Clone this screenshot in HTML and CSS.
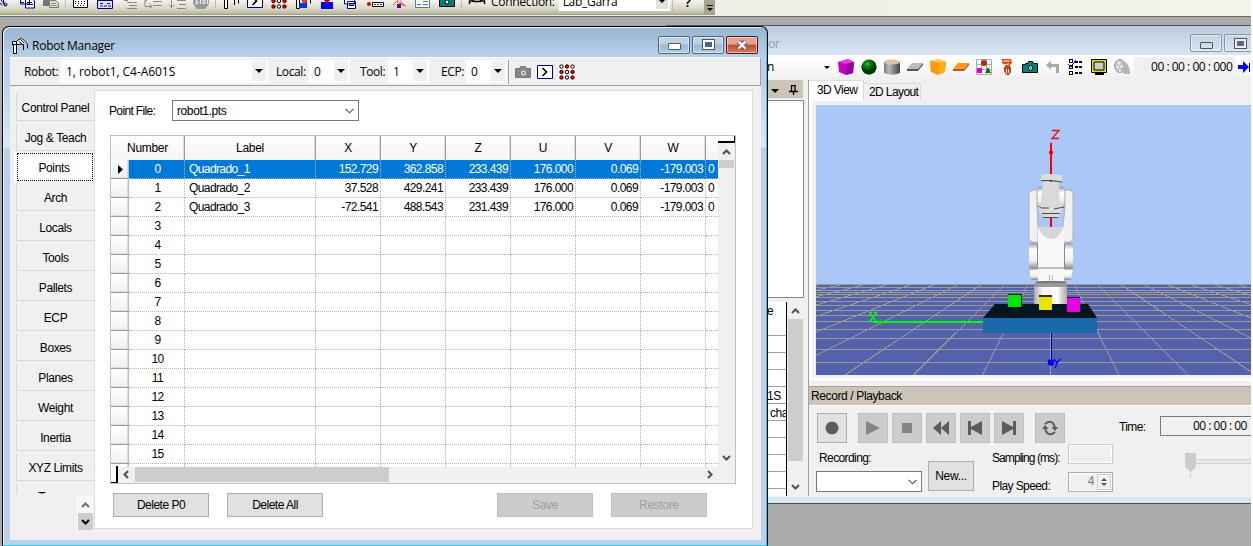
FILE: index.html
```
<!DOCTYPE html>
<html lang="en">
<head>
<meta charset="utf-8">
<title>Robot Manager</title>
<link rel="stylesheet" href="styles.css">
</head>
<body>
<svg class="defs" width="0" height="0">
  <defs>
    <g id="arm"><path d="M4 4l3-3 3-1 4 3 1 3-4 1-5-1z" fill="#fff"/><path d="M1.500 6.500v9h3v-9" fill="#fff" stroke="#000"/><path d="M.5 3.500h4v3h-4z" fill="#fff" stroke="#000"/><path d="M4.500 3.500l2-2 3-1 3 2 3 4M5 6.500l4-.5 3 1M8.500 1.500l4 4M6.500 3l4 3.500" fill="none" stroke="#000"/><path d="M11.500 6.500v5.500M15.500 6.500v4" stroke="#000" fill="none"/></g>
    <g id="dots">
      <g fill="#fff" stroke="#000"><circle cx="2.500" cy="2.500" r="1.700"/><circle cx="8" cy="8" r="1.700"/><circle cx="13.500" cy="2.500" r="1.700"/><circle cx="8" cy="13.500" r="1.700"/></g>
      <g fill="#f00" stroke="#300"><circle cx="8" cy="2.500" r="1.700"/><circle cx="2.500" cy="8" r="1.700"/><circle cx="13.500" cy="8" r="1.700"/><circle cx="2.500" cy="13.500" r="1.700"/><circle cx="13.500" cy="13.500" r="1.700"/></g>
    </g>
    <g id="console"><path d="M.5 1.500h15v13h-15z" fill="#fff" stroke="#000080"/><path d="M5.500 4l4 4-4 4" fill="none" stroke="#000" stroke-width="1.600"/></g>
    <g id="camera"><path d="M.5 5.500h3v-1h2l1-2h4l1 2h4v9h-15z" stroke="#000"/><circle cx="8.500" cy="9" r="2.300" fill="#fff" stroke="#000"/><circle cx="8.500" cy="9" r="1"/></g>
    <linearGradient id="cyl"><stop offset="0" stop-color="#777"/><stop offset=".3" stop-color="#bbb"/><stop offset="1" stop-color="#444"/></linearGradient>
    <linearGradient id="tube"><stop offset="0" stop-color="#aaa"/><stop offset=".25" stop-color="#f4f4f4"/><stop offset=".7" stop-color="#fff"/><stop offset="1" stop-color="#aaa"/></linearGradient>
    <linearGradient id="joint" x2="0" y2="1"><stop offset="0" stop-color="#999"/><stop offset=".25" stop-color="#fff"/><stop offset=".7" stop-color="#eee"/><stop offset="1" stop-color="#888"/></linearGradient>
    <radialGradient id="ball" cx=".4" cy=".3"><stop offset="0" stop-color="#9f9"/><stop offset=".4" stop-color="#0a0a14" stop-opacity="0"/><stop offset="1" stop-color="#003800"/></radialGradient>
  </defs>
</svg>
<div class="desktop">
  <header class="mainbar">
    <div class="strip">
      <svg class="strip-icons" width="490" height="14" viewBox="0 0 490 14">
        <path d="M0 2.500l2 3M3.500 0v4M1 0l5 6" fill="none" stroke="#000080"/><circle cx="5.500" cy="4.500" r="1.500" fill="none" stroke="#000080"/>
        <g fill="#fff" stroke="#000080"><path d="M20.500-2h9v6h-9zM25.500-1h7l2 2v7h-9z"/></g><path d="M27 2.500h5M27 4.500h6M21 2.500h3" stroke="#000080"/>
        <path d="M43-1h13v7h-13z" fill="#777"/><path d="M49.500.5h6l3 3v4h-9z" fill="#ddd" stroke="#777"/><path d="M51 3.500h5M51 5.500h6" stroke="#888"/>
        <path d="M65.500-1v10" stroke="#bbb"/>
        <path d="M73.500-1h14v8.500h-14z" fill="#fff" stroke="#000"/><path d="M75 1.500h11M75 3.500h11M77 5.500h8" stroke="#000" stroke-dasharray="1 2"/>
        <path d="M97.500-1h15v9.500h-15z" fill="#dde" stroke="#000080"/><path d="M97 .5h16" stroke="#000080"/><path d="M100 3.500h4M107 3.500h4M100 6h11" stroke="#225" stroke-dasharray="3 1"/>
        <path d="M124 .5h4M127 2.500h10M129 5.500h8M127 8.500h10M153 1.500h9M153 5.500h9M147 .5h-2v6h6M149 3.500l3 3-3 2M177 .5h9M179 4.500h7M177 8.500h9M171.500 0v7M168.500 4.500l3 3 3-3" fill="none" stroke="#888"/>
        <path d="M193-1h16v5l-4 5h-8l-4-5z" fill="#999"/><path d="M195 3.500h3v-2h-2V0M200.500 0v4M203 0h2v3.500h-2zM207.500 0v4" stroke="#eee" fill="none"/>
        <path d="M215.500-1v10" stroke="#bbb"/>
        <use href="#arm" x="223" y="-7"/><use href="#console" x="247" y="-7"/><use href="#dots" x="271" y="-7"/>
        <use href="#arm" x="295" y="-7"/><path d="M299 3h8v5h-8z" fill="#0030ff"/><path d="M302 0h5v2l-3 2-2-2z" fill="#e33"/>
        <path d="M321 2h12v7h-12z" fill="#00f"/><path d="M324 0h6l-3 4z" fill="#c00"/>
        <g fill="#fff" stroke="#000080"><path d="M344.500-1h10v5h-10zM347.500 1.500h8v7h-8z"/><path d="M349 3.500h5M349 5.500h5"/></g>
        <circle cx="369" cy="4" r="2" fill="#d00"/><path d="M372.500 2.500h11v4h-11z" fill="#fff" stroke="#000"/><path d="M374 4.500h8" stroke="#333" stroke-dasharray="2 1"/>
        <path d="M393 5l6-6 5 7M397 2l9 4" fill="none" stroke="#e44"/><path d="M397 4h4v4h-4z" fill="#608"/>
        <path d="M415.500-1h14v8.500h-14z" fill="#fff" stroke="#557aa8"/><path d="M417 4.500h4M423 1.500h5M423 4.500h5" stroke="#47a"/>
        <path d="M439.500-1h15v7.500h-15z" fill="#008080" stroke="#000"/><circle cx="447" cy="2" r="2" fill="#fff" stroke="#000"/>
        <path d="M461.500-1v10" stroke="#bbb"/>
        <path d="M469.500 4V1h3l2-2h5l2 2h3v3M473 1.500h8" fill="none" stroke="#000" stroke-width="1.500"/>
      </svg>
      <span class="conn">Connection:</span>
      <span class="conn-box">Lab_Garra<i><u class="arrow"></u></i></span>
      <span class="rule"></span><b class="help">?</b>
      <span class="overflow"><i></i><i class="arrow"></i></span>
    </div>
  </header>

  <section class="sim">
    <div class="sim-title"><span>or</span><div class="sim-btns"><i class="wb min"></i><i class="wb max"></i></div></div>
    <div class="sim-tools">
      <span class="sim-n">n</span><i class="arrow small"></i>
      <div class="sim-icons">
        <svg viewBox="0 0 16 16"><path d="M0 3l10-3 6 3-1 11-7 2-7-3z" fill="#c400c4"/><path d="M0 3l8 2 8-2-6-3z" fill="#e23be2"/><path d="M8 5l8-2-1 11-7 2z" fill="#980098"/></svg>
        <svg viewBox="0 0 16 16"><circle cx="8" cy="8" r="7.500" fill="#079207"/><circle cx="8" cy="8" r="7.500" fill="url(#ball)"/></svg>
        <svg viewBox="0 0 16 16"><path d="M0 3v11q8 3.500 16 0v-11z" fill="url(#cyl)"/><ellipse cx="8" cy="3" rx="8" ry="2.500" fill="#dcc2aa"/></svg>
        <svg viewBox="0 0 16 16"><path d="M5 4h11l-5 6h-11z" fill="#bbb"/><path d="M0 10h11l5-6v2l-5 6h-11z" fill="#555"/></svg>
        <svg viewBox="0 0 16 16"><path d="M0 2l9-2 7 3-1 10-7 3-7-3z" fill="#f90"/><path d="M0 2l9 2 7-1-7-3z" fill="#ffc766"/><path d="M9 4l7-1-1 10-7 3z" fill="#ffad20"/></svg>
        <svg viewBox="0 0 16 16"><path d="M5 4h11l-5 6h-11z" fill="#ff9a20"/><path d="M0 10h11l5-6v2l-5 6h-11z" fill="#a6611c"/></svg>
        <svg viewBox="0 0 16 16"><path d="M.5.500h15v15h-15zM5.500 1v14M10.500 1v14M0 5.500h16M0 10.500h16" fill="#fff" stroke="#aaa"/><circle cx="8" cy="4" r="3" fill="#a32c12"/><path d="M1 9h5v5h-5z" fill="#d0c"/><path d="M12 8l3 6h-6z" fill="#071"/></svg>
        <svg viewBox="0 0 16 16"><path d="M3 0h9l1 4-2 2v2h-5v-2l-3-2z" fill="#d84a18"/><path d="M4 2h7M5 6l5-1" stroke="#fff"/><path d="M5 8h7v5l-2 3h-3l-2-4z" fill="#b84428"/><path d="M7.500 10v5M9.500 10v4" stroke="#ddd"/></svg>
        <svg viewBox="0 0 16 16"><use href="#camera" fill="#008080"/></svg>
        <svg viewBox="0 0 16 16"><path d="M1 6l5-4v3h8v9h-3v-6h-5v3z" fill="#aaa"/></svg>
        <svg viewBox="0 0 16 16" shape-rendering="crispEdges"><path d="M1.500 .5h3v3h-3zM1.500 6.500h3v3h-3zM1.500 12.500h3v3h-3z" fill="#fff" stroke="#000"/><path d="M7 2.500h8M7 7.500h8M7 13.500h8" stroke="#000" stroke-width="2" stroke-dasharray="3 1"/><path d="M0 5l3 3 5-7" fill="none" stroke="#00f"/></svg>
        <svg viewBox="0 0 16 16"><path d="M.5.500h15v13h-15z" fill="#e6da22" stroke="#000"/><path d="M3 3h10v8h-10z" fill="#ccc" stroke="#000"/><path d="M4 15h9" stroke="#000" stroke-width="2"/></svg>
        <svg viewBox="0 0 16 16"><ellipse cx="6" cy="7" rx="5.500" ry="6.500" fill="#c4c4c4" stroke="#999"/><path d="M8 1q8 3 8 14h-6q-1-3-4-3z" fill="#b4b4b4"/><g fill="#eee"><circle cx="5" cy="4" r="1.500"/><circle cx="3.500" cy="8" r="1.500"/><circle cx="7.500" cy="7.500" r="1.500"/><circle cx="6" cy="11.500" r="1.200"/></g></svg>
      </div>
      <span class="clock">00 : 00 : 00 : 000</span>
      <svg class="step" viewBox="0 0 12 12"><path d="M0 4h5v-4l6 6-6 6v-4h-5z" fill="#00f"/><path d="M11.500 2v9" stroke="#000"/></svg>
    </div>
    <div class="sim-body">
      <aside class="side">
        <div class="side-head"><i class="arrow"></i><svg width="9" height="10" viewBox="0 0 9 10"><path d="M2 .5h5M2.500 0v6M6 0v6M0 6.500h9M4.500 7v3" stroke="#000" stroke-width="1.300" fill="none"/></svg></div>
        <div class="side-box"></div>
        <div class="props">
          <div class="prop-list"><p class="tall">e</p><p></p><p></p><p></p><p>1S</p><p class="in">cha</p><p></p><p></p><p></p><p></p><p></p></div>
          <div class="vbar"><svg width="9" height="6" viewBox="0 0 9 6"><path d="M1 5l3.500-3.500L8 5" /></svg><i></i><svg width="9" height="6" viewBox="0 0 9 6"><path d="M1 1l3.500 3.500L8 1"/></svg></div>
        </div>
      </aside>
      <div class="work">
        <nav class="view-tabs"><span class="on">3D View</span><span>2D Layout</span></nav>
        <div class="view">
          <svg width="435" height="270" viewBox="816 105 435 270">
            <path d="M816 105h435v270h-435z" fill="#abc7f8"/>
            <path d="M820 284h431v91h-435v-89z" fill="#5462ae"/>
            <g shape-rendering="crispEdges" stroke="#9b9b96" fill="none">
              <path d="M820 284.500H1251M816 287.500H1251M816 290.500H1251M816 292.500H1251M816 294.500H1251M816 297.500H1251M816 301.500H1251M816 305.500H1251M816 310.500H1251M816 315.500H1251M816 321.500H1251M816 329.500H1251M816 338.500H1251M816 349.500H1251M816 362.500H1251"/>
              <path d="M821 284L366 375M844 284L434 375M867 284L503 375M890 284L571 375M913 284L640 375M936 284L708 375M959 284L777 375M982 284L845 375M1005 284L913.500 375M1028 284L982.500 375M1050.500 284V375M1074 284L1119 375M1097 284L1188 375M1120 284L1256 375M1143 284L1325 375M1166 284L1393 375M1189 284L1462 375M1212 284L1530 375M1235 284L1599 375"/>
            </g>
            <path d="M1051 143v84" stroke="#f00" stroke-width="2"/><path d="M1049 151h4v3h-4z" fill="#f00"/>
            <path d="M1052 130.500h7l-7 8h7" fill="none" stroke="#f00" stroke-width="1.300"/>
            <path d="M1034 283h33v22h-33z" fill="url(#tube)"/>
            <path d="M1034 283q17-5 33 0v4h-33z" fill="#999"/><path d="M1036 282h30" stroke="#555"/>
            <path d="M1030 268h9v12h-7l-2-3zM1063 268h10l-2 12h-8z" fill="url(#joint)"/>
            <rect x="1037" y="187" width="28" height="21" rx="3" fill="url(#joint)" stroke="#aaa" stroke-width=".6"/>
            <path d="M1029 193q1-3 5-3h3v17l1 20v15h-6l-3-3zM1073 193q-1-3-5-3h-3v17l-2 20v15h7l3-3z" fill="#f1f1f1" stroke="#aaa" stroke-width=".8"/>
            <rect x="1029" y="243" width="10" height="26" rx="2" fill="url(#joint)"/><rect x="1063" y="243" width="10" height="26" rx="2" fill="url(#joint)"/>
            <path d="M1038 227h26v54h-26z" fill="#f8f8f8"/><path d="M1037.500 244v23M1064.500 244v23M1038 268h26" stroke="#888"/>
            <path d="M1038 227h26q-5 12-13 12t-13-12z" fill="#d6d6d6"/><path d="M1049 275h1v6h-1zM1052 275h1v6h-1z" fill="#bbb"/>
            <path d="M1038 203h26l-3 10-3 4h-14l-4-4z" fill="#ddd"/>
            <path d="M1043 182h16l1 28-3 8h-14l-3-8z" fill="#dadada"/>
            <path d="M1041 175h3v-1h13v1h5v6h-21z" fill="#dcdcdc"/><path d="M1041 180.500h10l11 1.500M1039 206l2 2h8M1054 209l10-2M1042 213.500h18M1043 217.500h15" stroke="#4a504a" fill="none"/>
            <path d="M995 304h93l9 14h-114z" fill="#051522"/>
            <path d="M983 318h114v15h-114z" fill="#1a67aa"/>
            <path d="M1008 294h14v13h-14z" fill="#031"/><path d="M1008 295h13v12h-13z" fill="#00e800"/>
            <path d="M1039 295h13v3h-13z" fill="#330"/><path d="M1039 297h13v13h-13z" fill="#e8e400"/>
            <path d="M1067 297h13v2h-13z" fill="#303"/><path d="M1067 298h13v14h-13z" fill="#e800e8"/>
            <path d="M873 322h110" stroke="#0f0" stroke-width="2"/><circle cx="880.500" cy="322" r="2" fill="none" stroke="#0c0"/>
            <path d="M869.500 313l6.500 8M876.500 313l-6.500 8M869 312.500h3M874 312.500h3M869 321.500h3" stroke="#0f0" stroke-width="1.300"/>
            <path d="M1051.500 333v28" stroke="#0000c0"/><circle cx="1051" cy="362.500" r="3.300" fill="#00f"/><path d="M1054 359l3 4 3-4M1057 363l-2 5" stroke="#00f" stroke-width="1.300" fill="none"/>
          </svg>
        </div>
        <div class="rec-head">Record / Playback</div>
        <div class="rec">
          <div class="rec-left">
            <div class="rec-btns">
              <i class="rb live"><svg viewBox="0 0 16 16"><circle cx="8" cy="8" r="6.500"/></svg></i>
              <i class="rb dim gap"><svg viewBox="0 0 16 16"><path d="M1 1l14 7-14 7z"/></svg></i>
              <i class="rb dim"><svg viewBox="0 0 16 16"><path d="M3 3h10v10h-10z"/></svg></i>
              <i class="rb"><svg viewBox="0 0 16 16"><path d="M8 1v14l-8-7zM16 1v14l-8-7z"/></svg></i>
              <i class="rb"><svg viewBox="0 0 16 16"><path d="M1 1h3v6l11-6v14l-11-6v6h-3z"/></svg></i>
              <i class="rb"><svg viewBox="0 0 16 16"><path d="M15 1h-3v6l-11-6v14l11-6v6h3z"/></svg></i>
              <i class="rb gap"><svg class="loop" viewBox="0 0 16 16"><path d="M3 4q4-4 8-1l2 4M13 12q-4 4-8 1l-2-4"/><path class="fill" d="M9.500 7h6.500l-3 4zM0 9h6.500l-3.500-4z"/></svg></i>
            </div>
            <div class="rec-row">
              <div class="rec-name"><span>Recording:</span><div class="combo"><svg width="9" height="6" viewBox="0 0 9 6"><path d="M.5 .8l4 4 4-4"/></svg></div></div>
              <span class="new">New...</span>
              <div class="rec-set"><span class="tight">Sampling (ms):</span><i class="fld"></i><span>Play Speed:</span><div class="fld spin">4<span class="ud"><i class="up"></i><i class="arrow small"></i></span></div></div>
            </div>
          </div>
          <div class="rec-right">
            <div class="time"><span>Time:</span><b>00 : 00 : 00</b></div>
            <svg class="slider" width="70" height="26" viewBox="0 0 70 26"><path d="M10 6.500h60v4h-60z" fill="#e7e7e7" stroke="#d6d6d6"/><path d="M3 0h11v14l-5.500 5-5.500-5z" fill="#ccc"/><path d="M8.500 20v4" stroke="#ccc"/></svg>
          </div>
        </div>
      </div>
    </div>
  </section>

  <section class="mgr">
    <div class="mgr-title">
      <svg width="16" height="16" viewBox="0 0 16 16"><use href="#arm"/></svg><span>Robot Manager</span>
      <div class="mgr-btns"><i class="wb min"></i><i class="wb max"></i><i class="wb close"><svg width="12" height="10" viewBox="0 0 12 10"><path d="M2.500 1.500l7 7M9.500 1.500l-7 7" stroke="#733" stroke-width="4.500"/><path d="M2.500 1.500l7 7M9.500 1.500l-7 7" stroke="#fff" stroke-width="2.600"/></svg></i></div>
    </div>
    <div class="client">
      <div class="mgr-tools">
        <span class="l1">Robot:</span><span class="cb robot">1, robot1, C4-A601S<i><u class="arrow"></u></i></span>
        <span class="l2">Local:</span><span class="cb">0<i><u class="arrow"></u></i></span>
        <span class="l3">Tool:</span><span class="cb">1<i><u class="arrow"></u></i></span>
        <span class="l4">ECP:</span><span class="cb">0<i><u class="arrow"></u></i></span>
        <div class="tool-icons">
          <svg viewBox="0 0 16 16"><path d="M.5 4.500h4l1-2h5l1 2h4v9h-15z" fill="#868686" stroke="#777"/><circle cx="8.500" cy="9" r="2.500" fill="#ddd"/><circle cx="8.500" cy="9" r="1" fill="#666"/></svg>
          <svg viewBox="0 0 16 16"><use href="#console"/></svg>
          <svg viewBox="0 0 16 16"><use href="#dots"/></svg>
        </div>
      </div>
      <div class="mgr-body">
        <nav class="tabs">
          <div class="tab-list"><span>Control Panel</span><span>Jog &amp; Teach</span><span class="on">Points</span><span>Arch</span><span>Locals</span><span>Tools</span><span>Pallets</span><span>ECP</span><span>Boxes</span><span>Planes</span><span>Weight</span><span>Inertia</span><span>XYZ Limits</span><span class="part">Torque</span></div>
          <div class="tab-spin"><i><svg width="9" height="6" viewBox="0 0 9 6"><path d="M1 5l3.500-3.500L8 5"/></svg></i><i class="dn"><svg width="9" height="6" viewBox="0 0 9 6"><path d="M1 1l3.500 3.500L8 1"/></svg></i></div>
        </nav>
        <main class="page">
          <div class="file"><span>Point File:</span><div class="combo">robot1.pts<svg width="9" height="6" viewBox="0 0 9 6"><path d="M.5 .8l4 4 4-4"/></svg></div></div>
          <div class="grid">
            <div class="cells">
              <div class="gr head"><b class="num">Number</b><b>Label</b><b>X</b><b>Y</b><b>Z</b><b>U</b><b>V</b><b>W</b><b></b></div>
              <div class="gr sel"><i><svg width="5" height="9" viewBox="0 0 5 9"><path d="M0 0l5 4.500-5 4.500z"/></svg></i><span>0</span><span>Quadrado_1</span><span>152.729</span><span>362.858</span><span>233.439</span><span>176.000</span><span>0.069</span><span>-179.003</span><span>0</span></div>
              <div class="gr"><i></i><span>1</span><span>Quadrado_2</span><span>37.528</span><span>429.241</span><span>233.439</span><span>176.000</span><span>0.069</span><span>-179.003</span><span>0</span></div>
              <div class="gr"><i></i><span>2</span><span>Quadrado_3</span><span>-72.541</span><span>488.543</span><span>231.439</span><span>176.000</span><span>0.069</span><span>-179.003</span><span>0</span></div>
              <div class="gr"><i></i><span>3</span><span></span><span></span><span></span><span></span><span></span><span></span><span></span><span></span></div>
              <div class="gr"><i></i><span>4</span><span></span><span></span><span></span><span></span><span></span><span></span><span></span><span></span></div>
              <div class="gr"><i></i><span>5</span><span></span><span></span><span></span><span></span><span></span><span></span><span></span><span></span></div>
              <div class="gr"><i></i><span>6</span><span></span><span></span><span></span><span></span><span></span><span></span><span></span><span></span></div>
              <div class="gr"><i></i><span>7</span><span></span><span></span><span></span><span></span><span></span><span></span><span></span><span></span></div>
              <div class="gr"><i></i><span>8</span><span></span><span></span><span></span><span></span><span></span><span></span><span></span><span></span></div>
              <div class="gr"><i></i><span>9</span><span></span><span></span><span></span><span></span><span></span><span></span><span></span><span></span></div>
              <div class="gr"><i></i><span>10</span><span></span><span></span><span></span><span></span><span></span><span></span><span></span><span></span></div>
              <div class="gr"><i></i><span>11</span><span></span><span></span><span></span><span></span><span></span><span></span><span></span><span></span></div>
              <div class="gr"><i></i><span>12</span><span></span><span></span><span></span><span></span><span></span><span></span><span></span><span></span></div>
              <div class="gr"><i></i><span>13</span><span></span><span></span><span></span><span></span><span></span><span></span><span></span><span></span></div>
              <div class="gr"><i></i><span>14</span><span></span><span></span><span></span><span></span><span></span><span></span><span></span><span></span></div>
              <div class="gr"><i></i><span>15</span><span></span><span></span><span></span><span></span><span></span><span></span><span></span><span></span></div>
              <div class="gr"><i></i><span></span><span></span><span></span><span></span><span></span><span></span><span></span><span></span><span></span></div>
            </div>
            <div class="gv"><b></b><svg width="9" height="6" viewBox="0 0 9 6"><path d="M1 5l3.500-3.500L8 5"/></svg><i></i><svg class="end" width="9" height="6" viewBox="0 0 9 6"><path d="M1 1l3.500 3.500L8 1"/></svg></div>
            <div class="gh"><b></b><svg width="6" height="9" viewBox="0 0 6 9"><path d="M5 1L1.500 4.500 5 8"/></svg><i></i><svg class="end" width="6" height="9" viewBox="0 0 6 9"><path d="M1 1l3.500 3.500L1 8"/></svg></div>
          </div>
          <div class="actions"><span>Delete P0</span><span>Delete All</span><span class="off push">Save</span><span class="off">Restore</span></div>
        </main>
      </div>
    </div>
  </section>
</div>
</body>
</html>
```
FILE: styles.css
```
* { box-sizing: border-box; }
body { margin: 0; background: #fff; font: 12px/14px "Liberation Sans", Arial, sans-serif; letter-spacing: -0.4px; color: #000; }
i, u { font-style: normal; text-decoration: none; }
p { margin: 0; }
svg { display: block; flex: none; }
.defs { position: absolute; }
.desktop { position: relative; width: 1251px; height: 546px; overflow: hidden; background: #ababab; }
.arrow { display: block; flex: none; border: 4px solid transparent; border-top-color: #000; border-bottom: 0; width: 0; height: 0; }
.arrow.small { border-width: 3px; border-bottom: 0; }
.combo { display: flex; align-items: center; justify-content: space-between; border: 1px solid #7a7a7a; background: #fff; padding: 0 4px; }
.combo path { fill: none; stroke: #555; stroke-width: 1.1; }

/* main toolbar */
.mainbar { height: 17px; background: linear-gradient(90deg, #eceadc, #f3f3ea); border-bottom: 1px solid #696969; }
.strip { display: flex; width: 715px; height: 15px; background: linear-gradient(#f4f3ee 0, #d8d7c5 9px, #b6b59c 14px); border-bottom: 1px solid #a3a287; font: 12px/14px "Open Sans", sans-serif; letter-spacing: -0.1px; overflow: hidden; }
.strip-icons { flex: none; }
.conn { width: 68px; margin: -5px 0 0 1px; letter-spacing: -.3px; }
.conn-box { display: flex; justify-content: space-between; width: 112px; height: 11px; background: #fff; padding: 0 2px 0 4px; line-height: 4px; letter-spacing: -.3px; }
.conn-box i { display: flex; justify-content: center; width: 12px; height: 9px; background: #e3e2d6; }
.conn-box .arrow { margin-top: -1px; }
.rule { width: 1px; margin-left: 2px; background: #bbb; }
.help { width: 31px; padding-left: 12px; line-height: 6px; }
.overflow { width: 11px; padding: 5px 2px 0 3px; background: #a8a78e; }
.overflow i { display: block; width: 6px; height: 1px; background: #000; margin-bottom: 2px; }
.overflow .arrow { width: 0; height: 0; border-width: 3px; border-bottom: 0; background: none; }

/* window buttons */
.wb { display: flex; align-items: center; justify-content: center; width: 32px; height: 18px; border: 1px solid #51657f; border-radius: 2px; box-shadow: inset 0 0 0 1px #ffffff80; background: linear-gradient(#bdd0e6 45%, #9ab6d4 50%, #b5cfe8); }
.wb.min::before { content: ""; width: 11px; height: 5px; margin-top: 4px; background: #fff; border: 1px solid #555b66; border-radius: 1px; }
.wb.max::before { content: ""; width: 11px; height: 9px; border: 1px solid #50555f; background: #4f6480; box-shadow: inset 0 0 0 2px #fff; }
.wb.close { border-color: #4d1617; background: linear-gradient(#e5a394 45%, #bd4b35 50%, #d87b63); }

/* simulator window */
.sim { position: absolute; left: 666px; top: 25px; width: 590px; height: 479px; background: #f0f0f0; border-top: 1px solid #555; border-bottom: 1px solid #505050; box-shadow: inset 0 -6px #d7e5f3; }
.sim-title { display: flex; justify-content: space-between; height: 29px; padding: 11px 0 0 102px; color: #909aa5; background: linear-gradient(#bccadb, #d9e7f4); font: 12px/14px "Open Sans", sans-serif; }
.sim-btns { display: flex; gap: 2px; margin: -3px 0 0 0; }
.sim-btns .wb { background: none; border-color: #8494ad; }
.sim-btns .wb::before { border-color: #555; background: none; }
.sim-btns .max::before { box-shadow: inset 0 0 0 2px #eef; background: #667; }
.sim-tools { display: flex; align-items: center; height: 25px; padding: 0 0 1px 101px; background: linear-gradient(#fff, #f8f8f8 60%, #eee); }
.sim-n { width: 57px; font-family: "Open Sans", sans-serif; }
.sim-icons { display: flex; gap: 7px; margin-left: 8px; }
.sim-icons svg { width: 16px; height: 16px; }
.clock { width: 101px; margin-left: 4px; padding-left: 17px; background: #f0f0f0; font: 12px/20px "Open Sans", sans-serif; letter-spacing: -0.48px; white-space: nowrap; }
.step { width: 12px; height: 12px; margin-left: 3px; }
.sim-body { display: flex; height: 416px; }
.side { width: 143px; padding-right: 5px; border-right: 1px solid #a0a0a0; }
.side-head { display: flex; align-items: center; justify-content: flex-end; gap: 10px; width: 137px; height: 18px; padding: 1px 5px 0 0; background: #cdc4b8; }
.side-head .arrow { margin-top: 2px; }
.side-box { width: 138px; height: 198px; margin-top: 2px; background: #fff; border: 1px solid #828790; }
.props { display: flex; height: 194px; margin-top: 4px; overflow: hidden; }
.prop-list { width: 121px; flex: none; background: #fff; border-right: 1px solid #000; overflow: hidden; }
.prop-list p { height: 17px; padding-left: 101px; border-bottom: 1px solid #a0a0a0; line-height: 18px; white-space: nowrap; }
.prop-list .tall { height: 34px; }
.prop-list .in { padding-left: 104px; }
.vbar { display: flex; flex-direction: column; align-items: center; width: 17px; padding: 6px 0; }
.vbar i { width: 15px; height: 144px; margin: 5px 0 23px; background: #cdcdcd; }
.vbar path, .gv path, .gh path { fill: none; stroke: #505050; stroke-width: 2; }
.work { display: flex; flex-direction: column; flex: 1; }
.view-tabs { display: flex; align-items: flex-end; height: 21px; }
.view-tabs span { width: 57px; height: 18px; padding: 1px 0 0 5px; border: 1px solid #dcdcdc; border-width: 1px 1px 0 0; line-height: 14px; letter-spacing: -.6px; white-space: nowrap; }
.view-tabs .on { width: 55px; height: 21px; padding: 2px 0 0 8px; background: #fff; }
.view { height: 280px; padding: 4px 0 3px 4px; border: 3px solid #fff; border-width: 0 0 3px 3px; }
.rec-head { height: 20px; margin-top: 5px; padding: 2px 0 0 2px; background: #cdc4b8; border-top: 1px solid #a0a0a0; border-bottom: 1px solid #fff; line-height: 14px; letter-spacing: -.38px; }
.rec { display: flex; padding: 7px 0 0 8px; }
.rec-left { width: 302px; }
.rec-btns { display: flex; gap: 4px; }
.rb { display: flex; align-items: center; justify-content: center; width: 30px; height: 30px; background: #ccc; border: 1px solid #bfbfbf; }
.rb.live { background: #e1e1e1; border-color: #adadad; }
.rb.gap { margin-left: 7px; }
.rb svg { width: 16px; height: 16px; fill: #5c5c5c; }
.rb.dim svg { fill: #868686; }
.loop path { fill: none; stroke: #5c5c5c; stroke-width: 2; }
.loop .fill { fill: #5c5c5c; stroke: none; }
.rec-row { display: flex; }
.rec-name { width: 111px; padding-top: 8px; }
.rec-name span { display: block; margin-left: 2px; letter-spacing: -.6px; }
.rec-name .combo { justify-content: flex-end; width: 106px; height: 21px; margin: 6px 0 0 -1px; }
.new { width: 46px; height: 30px; margin-top: 18px; background: #e1e1e1; border: 1px solid #adadad; text-align: center; line-height: 28px; letter-spacing: -.3px; }
.rec-set { display: grid; grid-template-columns: 76px 45px; grid-template-rows: 28px 21px; margin: 1px 0 0 18px; white-space: nowrap; }
.rec-set > span { padding-top: 7px; letter-spacing: -.6px; }
.rec-set .tight { letter-spacing: -.93px; }
.fld { height: 20px; border: 1px solid #ccc; box-shadow: inset 0 0 0 1px #fff; }
.spin { display: flex; justify-content: flex-end; border-color: #adadad; color: #777; line-height: 17px; }
.ud { display: flex; flex-direction: column; align-items: center; justify-content: space-between; width: 14px; margin: 1px 1px 1px 3px; padding: 3px 0; border: 1px solid #d0d0d0; }
.ud .arrow { border-top-color: #555; }
.ud .up { border: 3px solid transparent; border-top: 0; border-bottom-color: #555; }
.rec-right { padding-top: 3px; }
.time { display: flex; align-items: center; }
.time span { width: 41px; letter-spacing: -.6px; padding-top: 1px; }
.time b { width: 100px; height: 20px; padding-left: 32px; border: 1px solid #7a7a7a; font: 12px/18px "Open Sans", sans-serif; letter-spacing: -.5px; white-space: nowrap; }
.slider { margin: 17px 0 0 63px; }

/* robot manager window */
.mgr { position: absolute; left: 2px; top: 26px; width: 766px; height: 520px; padding: 1px 6px 6px 7px; border: 1px solid #000; border-bottom: 1px solid #33c6e4; border-radius: 7px 7px 0 0; box-shadow: inset -1px 0 #33c6e4, inset 1px 1px #e8f2fc; background: linear-gradient(#99b4d1, #b9d1ea 30px, #b9d1ea 50px, #dae8f7 120px, #b9d1ea 121px); }
.mgr-title { display: flex; align-items: center; height: 29px; padding: 6px 3px 0 2px; font: 12px/16px "Open Sans", sans-serif; letter-spacing: -.25px; }
.mgr-title > span { margin-left: 4px; }
.mgr-btns { display: flex; gap: 2px; margin: -2px 0 0 auto; }
.client { height: 483px; background: #f0f0f0; }
.mgr-tools { display: flex; align-items: center; height: 29px; padding-left: 14px; border-bottom: 1px solid #a0a0a0; border-right: 1px solid #a0a0a0; border-top: 1px solid #fff; font: 12px/20px "Open Sans", sans-serif; letter-spacing: -.4px; white-space: nowrap; }
.l1 { width: 37px; }
.l2 { width: 33px; margin-left: 8px; }
.l3 { width: 28px; margin-left: 10px; }
.l4 { width: 25px; margin-left: 12px; }
.cb { display: flex; justify-content: space-between; width: 41px; height: 23px; padding: 1px 2px 2px 5px; background: #fff; line-height: 21px; }
.cb.robot { width: 207px; letter-spacing: -.05px; }
.cb i { display: flex; align-items: center; justify-content: center; width: 14px; background: #f0f0f0; }
.tool-icons { display: flex; align-items: center; gap: 6px; height: 24px; margin-left: 1px; padding-left: 6px; border-left: 1px solid #a0a0a0; }
.tool-icons svg { width: 16px; height: 16px; }
.mgr-body { display: flex; height: 454px; padding: 4px 8px 11px 4px; }
.tabs { width: 80px; }
.tab-list { height: 404px; overflow: hidden; padding-top: 3px; }
.tab-list span { display: block; height: 28px; margin: 0 0 2px 2px; border: 1px solid #d9d9d9; border-width: 0 0 1px 1px; text-align: center; line-height: 30px; letter-spacing: -.38px; }
.tab-list .on { position: relative; height: 30px; margin: -1px 0 1px 0; background: #fff; border: 0; line-height: 32px; }
.tab-list .part { line-height: 29px; }
.tab-list .on::after { content: ""; position: absolute; inset: 1px 1px 1px 3px; border: 1px dotted #000; }
.tab-spin { width: 16px; margin: 2px 0 0 63px; background: #f8f8f8; border-left: 1px solid #fff; }
.tab-spin i { display: flex; align-items: center; justify-content: center; height: 17px; }
.tab-spin .dn { background: #cdcdcd; }
.tab-spin path { fill: none; stroke: #707070; stroke-width: 2; }
.tab-spin .dn path { stroke: #000; }
.page { width: 659px; height: 439px; padding: 9px 0 0 14px; background: #fff; border: 1px solid #dcdcdc; }
.file { display: flex; align-items: center; }
.file > span { width: 63px; letter-spacing: -.64px; }
.file .combo { width: 187px; height: 21px; letter-spacing: -.4px; }
.grid { display: grid; grid-template: 330px 17px / 607px 17px; width: 626px; height: 349px; margin: 14px 0 0 1px; border: 1px solid #b5c5d2; background: #f0f0f0; }
.cells { overflow: hidden; background: #fff; letter-spacing: -.58px; width: 607px; height: 331px; }
.gr { display: grid; grid-template-columns: 18px 56px 131px 65px 65px 65px 65px 65px 65px 12px; height: 19px; line-height: 18px; white-space: nowrap; }
.gr > span { border-right: 1px dotted #b4b4b4; border-bottom: 1px dotted #b4b4b4; text-align: right; padding-right: 2px; }
.gr > span:nth-child(2) { text-align: center; padding-left: 4px; }
.gr > span:nth-child(3) { text-align: left; padding-left: 4px; letter-spacing: -.6px; }
.gr > span:last-child { border-right: 0; text-align: left; padding-left: 2px; }
.gr > i { display: flex; align-items: center; justify-content: center; background: linear-gradient(#fff, #f0f0f0); border-right: 1px solid #b4c0c0; border-bottom: 1px solid #8aa5a5; box-shadow: inset -1px -1px #ddd; }
.gr > i svg { margin-left: 2px; }
.gr.sel span { background: #0078d7; color: #fff; }
.gr.head { grid-template-columns: 74px 131px 65px 65px 65px 65px 65px 65px 12px; height: 24px; }
.head b { font-weight: normal; text-align: center; line-height: 25px; letter-spacing: -.3px; background: linear-gradient(#fff, #f3f3f3); border-right: 1px solid #8aa5a5; border-bottom: 1px solid #8aa5a5; box-shadow: inset -1px 0 #ddd; }
.head b:last-child { border-right: 0; box-shadow: none; }
.gv { display: flex; flex-direction: column; align-items: center; }
.gv b { width: 17px; height: 7px; background: #fff; border: 2px solid #000; border-width: 0 1px 2px 0; }
.gv svg { margin-top: 6px; }
.gv i { width: 15px; height: 8px; margin-top: 5px; background: #cdcdcd; }
.gv .end { margin-top: auto; margin-bottom: 5px; }
.gh { display: flex; align-items: center; grid-column: 1 / 3; width: 607px; }
.gh b { width: 7px; height: 17px; background: #fff; border: 2px solid #000; border-width: 0 2px 1px 0; }
.gh svg { margin-left: 5px; }
.gh i { width: 254px; height: 15px; margin-left: 6px; background: #cdcdcd; }
.gh .end { margin-left: auto; margin-right: 5px; }
.actions { display: flex; gap: 18px; margin: 9px 0 0 4px; }
.actions span { width: 96px; height: 24px; background: #e1e1e1; border: 1px solid #adadad; text-align: center; line-height: 22px; letter-spacing: -.5px; }
.actions .off { background: #ccc; border-color: #bfbfbf; color: #a0a0a0; letter-spacing: -.3px; }
.actions .push { margin-left: 156px; }
```
